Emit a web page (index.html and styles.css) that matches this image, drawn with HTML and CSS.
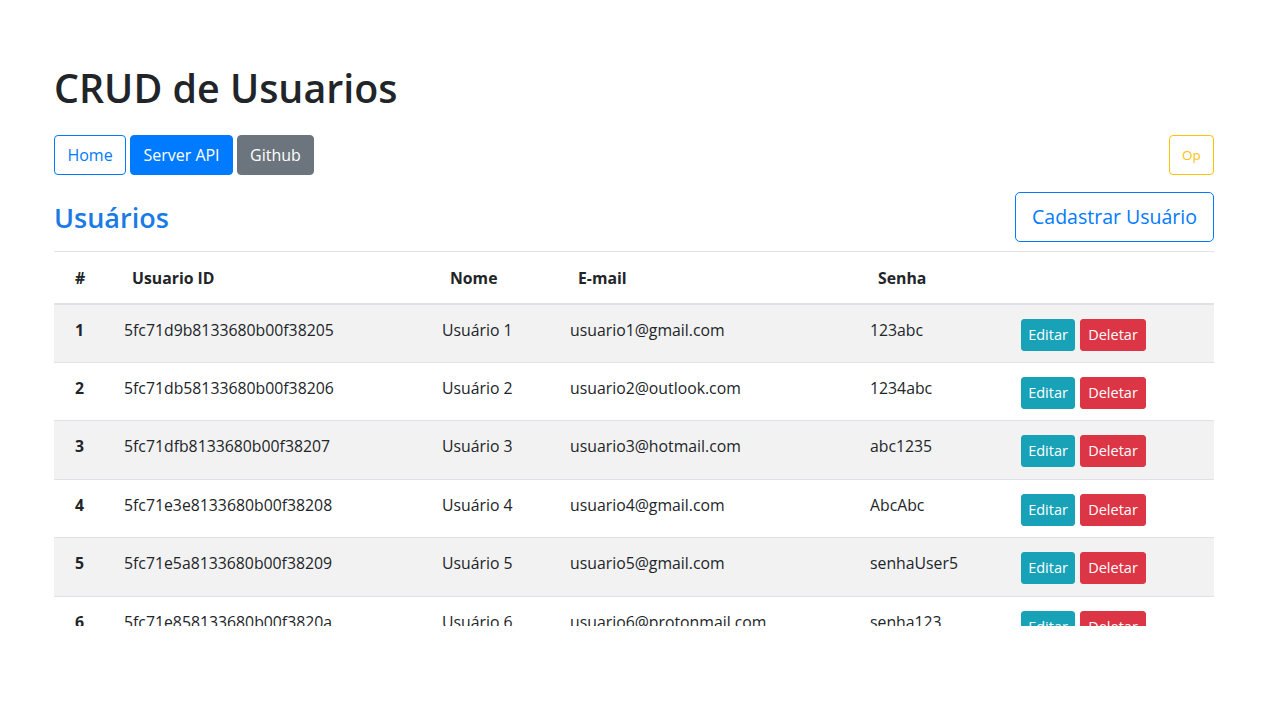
FILE: index.html
```html
<!DOCTYPE html>
<html lang="pt-BR">
<head>
<meta charset="utf-8">
<title>CRUD de Usuarios</title>
<link rel="stylesheet" href="styles.css">
</head>
<body>
<div class="container">
  <h1 class="title">CRUD de Usuarios</h1>
  <nav class="nav">
    <a class="btn btn-outline-primary">Home</a>
    <a class="btn btn-primary">Server API</a>
    <a class="btn btn-secondary">Github</a>
    <a class="btn btn-outline-warning btn-op">Op</a>
  </nav>
  <div class="section-head">
    <h2 class="section-title">Usuários</h2>
    <a class="btn btn-outline-primary btn-lg">Cadastrar Usuário</a>
  </div>
  <div class="table-wrap">
    <table class="table">
      <colgroup>
        <col class="c-num"><col class="c-id"><col class="c-nome"><col class="c-email"><col class="c-senha"><col class="c-act">
      </colgroup>
      <thead>
        <tr><th class="first">#</th><th>Usuario ID</th><th>Nome</th><th>E-mail</th><th>Senha</th><th></th></tr>
      </thead>
      <tbody>
        <tr><td class="first num">1</td><td>5fc71d9b8133680b00f38205</td><td>Usuário 1</td><td>usuario1@gmail.com</td><td>123abc</td><td class="acts"><a class="btn btn-sm btn-info">Editar</a><a class="btn btn-sm btn-danger">Deletar</a></td></tr>
        <tr><td class="first num">2</td><td>5fc71db58133680b00f38206</td><td>Usuário 2</td><td>usuario2@outlook.com</td><td>1234abc</td><td class="acts"><a class="btn btn-sm btn-info">Editar</a><a class="btn btn-sm btn-danger">Deletar</a></td></tr>
        <tr><td class="first num">3</td><td>5fc71dfb8133680b00f38207</td><td>Usuário 3</td><td>usuario3@hotmail.com</td><td>abc1235</td><td class="acts"><a class="btn btn-sm btn-info">Editar</a><a class="btn btn-sm btn-danger">Deletar</a></td></tr>
        <tr><td class="first num">4</td><td>5fc71e3e8133680b00f38208</td><td>Usuário 4</td><td>usuario4@gmail.com</td><td>AbcAbc</td><td class="acts"><a class="btn btn-sm btn-info">Editar</a><a class="btn btn-sm btn-danger">Deletar</a></td></tr>
        <tr><td class="first num">5</td><td>5fc71e5a8133680b00f38209</td><td>Usuário 5</td><td>usuario5@gmail.com</td><td>senhaUser5</td><td class="acts"><a class="btn btn-sm btn-info">Editar</a><a class="btn btn-sm btn-danger">Deletar</a></td></tr>
        <tr><td class="first num">6</td><td>5fc71e858133680b00f3820a</td><td>Usuário 6</td><td>usuario6@protonmail.com</td><td>senha123</td><td class="acts"><a class="btn btn-sm btn-info">Editar</a><a class="btn btn-sm btn-danger">Deletar</a></td></tr>
      </tbody>
    </table>
  </div>
</div>
</body>
</html>
```
FILE: styles.css
```css
* { box-sizing: border-box; }
html, body { margin: 0; padding: 0; background: #fff; }
body {
  font-family: "Segoe UI", "Open Sans", "Noto Sans", sans-serif;
  color: #212529;
  font-size: 16px;
  line-height: 1.5;
}
.container {
  width: 1160px;
  margin-left: 54px;
  padding-top: 64px;
}
.title {
  margin: 0 0 23px;
  font-size: 39.4px;
  font-weight: 600;
  line-height: 48px;
}
.nav {
  display: flex;
  gap: 4px;
  height: 40px;
  margin-bottom: 17px;
}
.btn {
  display: inline-flex;
  align-items: center;
  justify-content: center;
  border: 1px solid transparent;
  border-radius: 4px;
  padding: 0 12px;
  height: 40px;
  font-size: 16px;
  text-decoration: none;
  white-space: nowrap;
}
.btn-outline-primary { color: #007bff; border-color: #007bff; background: #fff; }
.btn-primary { color: #fff; background: #007bff; border-color: #007bff; }
.btn-secondary { color: #fff; background: #6c757d; border-color: #6c757d; }
.btn-outline-warning { color: #ffc107; border-color: #ffc107; background: #fff; }
.btn-op { margin-left: auto; width: 45px; padding: 0; font-size: 13.5px; }
.nav .btn:nth-child(1) { width: 72px; }
.nav .btn:nth-child(2) { width: 103px; }
.nav .btn:nth-child(3) { width: 77px; }
.section-head {
  display: flex;
  align-items: center;
  justify-content: space-between;
  height: 50px;
  margin-bottom: 9px;
}
.section-title {
  margin: 0;
  font-size: 27px;
  font-weight: 600;
  color: #1a7ae6;
  line-height: 1.2;
  padding-top: 2px;
}
.btn-lg { height: 50px; width: 199px; font-size: 19.5px; padding: 0 16px; border-radius: 5px; }
.table-wrap {
  height: 375px;
  overflow: hidden;
}
.table {
  width: 1160px;
  border-collapse: collapse;
  table-layout: fixed;
  font-size: 15.8px;
}
.c-num { width: 58px; }
.c-id { width: 318px; }
.c-nome { width: 128px; }
.c-email { width: 300px; }
.c-senha { width: 151px; }
.c-act { width: 205px; }
.table th {
  text-align: left;
  font-weight: 700;
  border-top: 1px solid #dee2e6;
  border-bottom: 2px solid #dee2e6;
  padding: 13px 12px 12px 20px;
  line-height: 24px;
  height: 52px;
}
.table th.first, .table td.first { padding-left: 21px; }
.table td {
  border-top: 1px solid #dee2e6;
  padding: 13px 12px 11px;
  line-height: 24px;
  vertical-align: top;
  height: 58.6px;
}
.table tbody tr:nth-child(odd) { background: #f2f2f2; }
.table td.num { font-weight: 700; }
.table td.acts { padding-top: 14px; }
.btn-sm {
  height: 32px;
  font-size: 14.5px;
  padding: 0;
  border-radius: 3px;
  color: #fff;
  vertical-align: top;
}
.btn-sm + .btn-sm { margin-left: 5px; }
.btn-info { background: #17a2b8; border-color: #17a2b8; width: 54px; }
.btn-danger { background: #dc3545; border-color: #dc3545; width: 66px; }
```
